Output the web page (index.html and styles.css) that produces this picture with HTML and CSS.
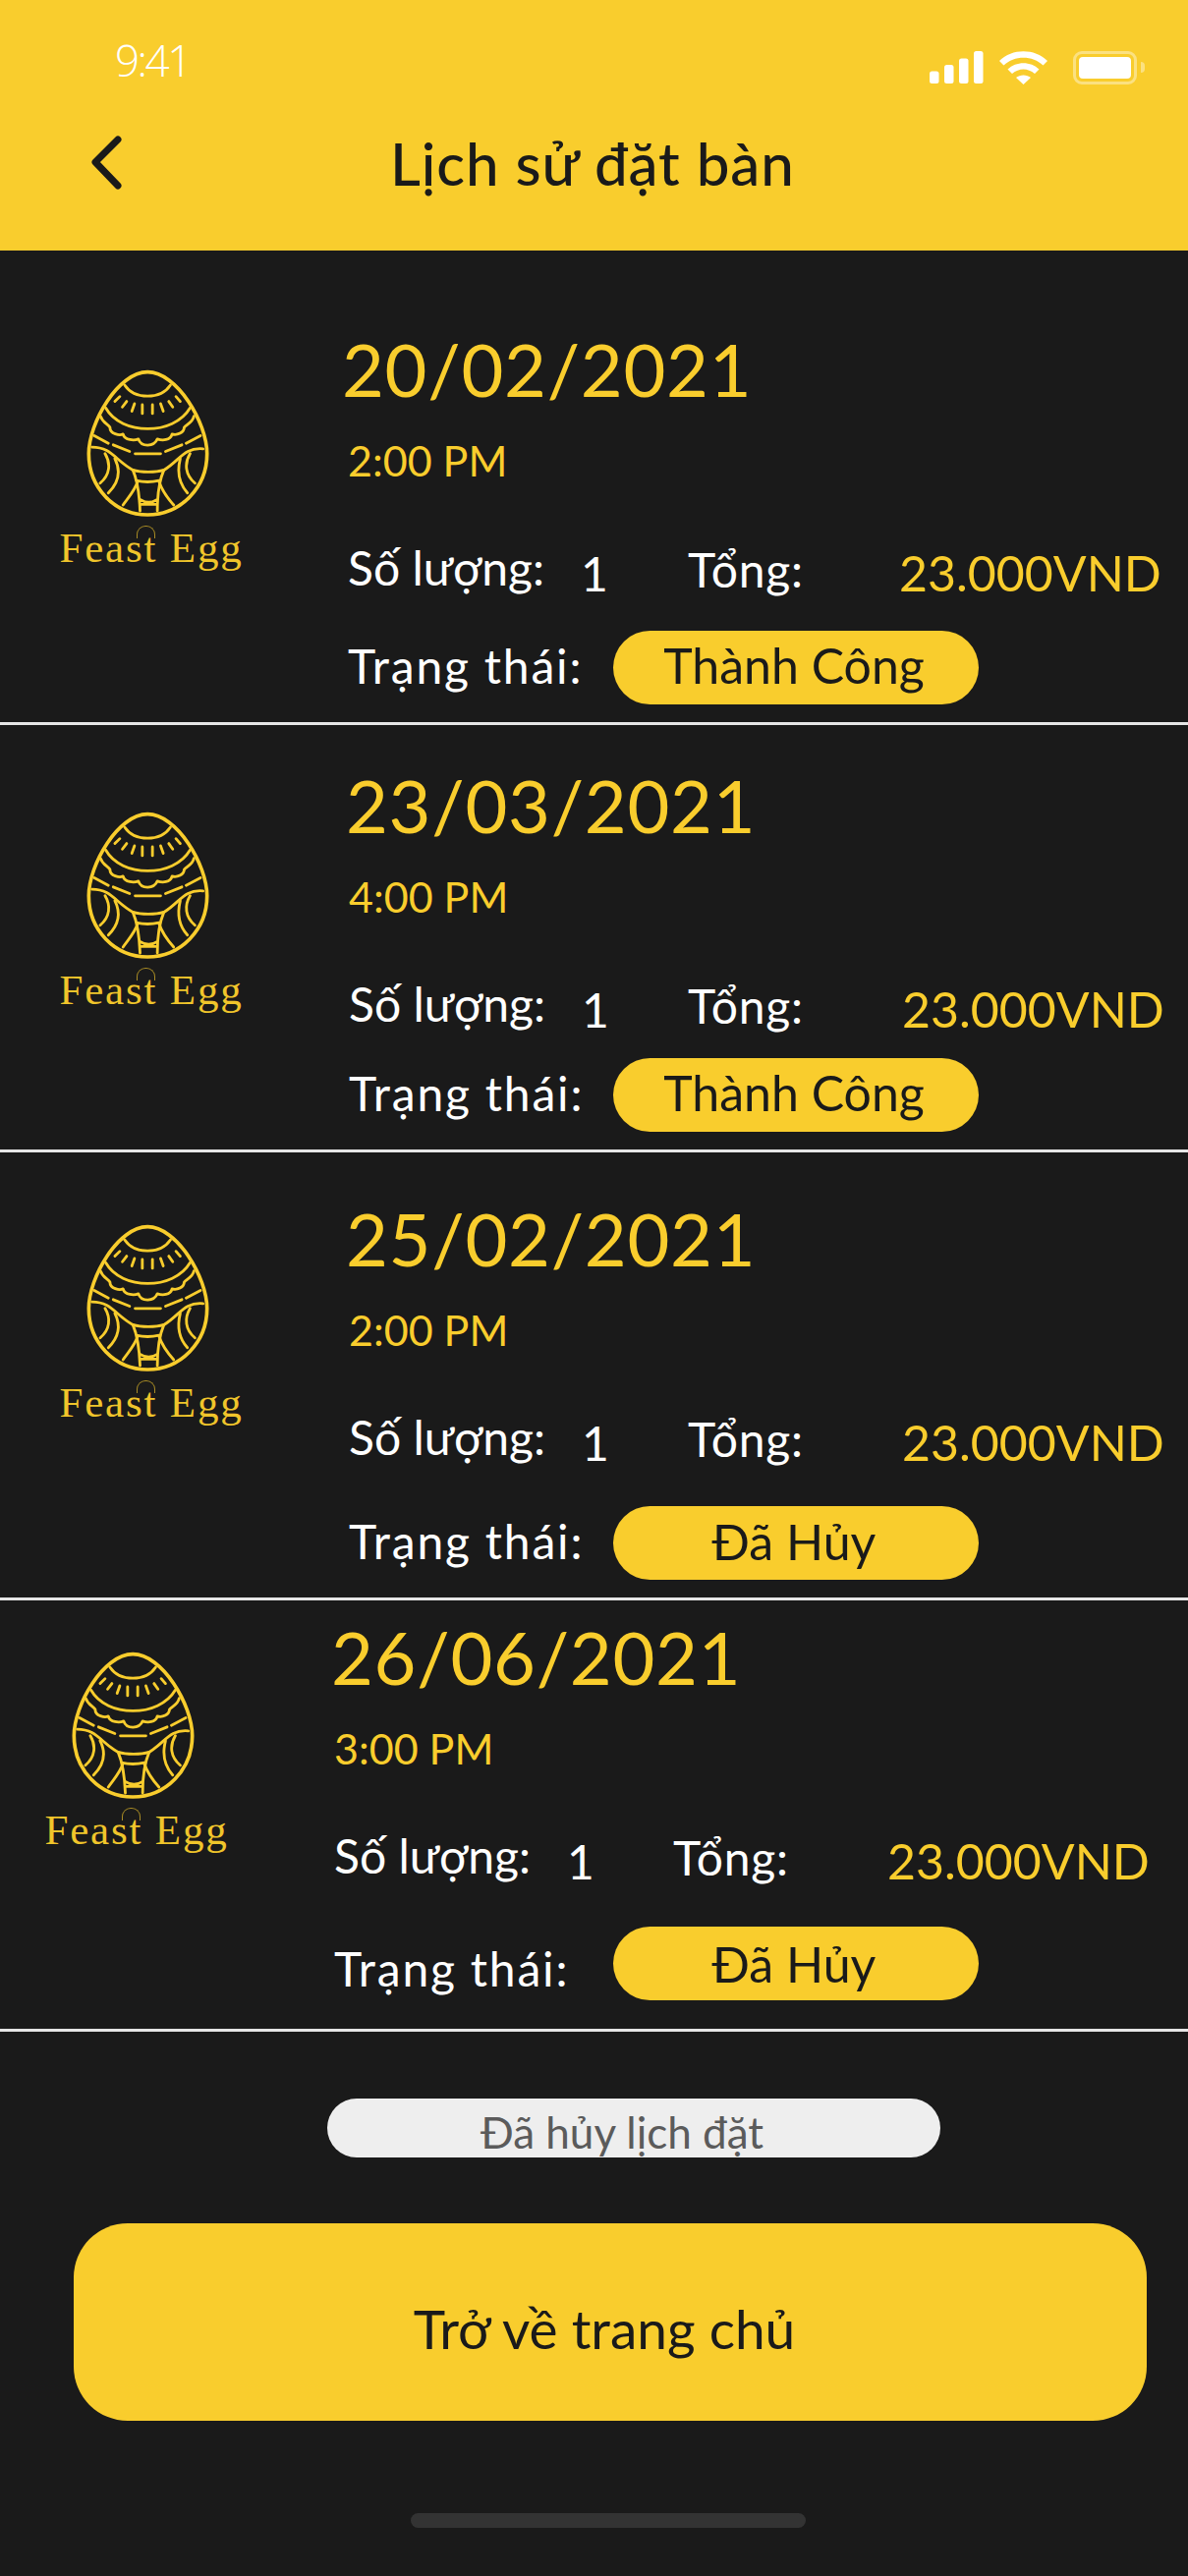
FILE: index.html
```html
<!DOCTYPE html>
<html lang="vi">
<head>
<meta charset="utf-8">
<title>Lịch sử đặt bàn</title>
<link rel="stylesheet" href="styles.css">
</head>
<body>
<svg class="defs" width="0" height="0" aria-hidden="true">
  <symbol id="egg" viewBox="170 105 382 458">
    <g fill="none" stroke="#f9cd2d" stroke-width="8.500" stroke-linecap="round" stroke-linejoin="round">
      <path stroke-width="11" d="M360 115C270 115 180 270 180 365C180 470 260 552 360 552C460 552 542 470 542 365C542 270 450 115 360 115Z"/>
      <path d="M290 155C320 200 400 200 430 155"/>
      <path d="M260 205L275 190M283 222L296 205M312 235L320 212M344 242V215M375 242V215M408 235L400 212M437 222L425 205M460 205L447 190"/>
      <path d="M232 225C280 310 440 310 490 225"/>
      <path d="M216 250C222 270 240 275 245 285C245 305 275 310 285 305C290 325 320 325 332 320C340 345 380 345 390 320C405 325 430 325 435 305C450 310 472 300 472 285C480 275 498 270 502 250"/>
      <path d="M197 310L240 333M255 338L305 358M322 365H400M415 358L465 338M478 333L522 310"/>
      <path d="M190 345C250 345 260 385 315 415C340 423 385 423 410 415C460 385 470 345 530 350"/>
      <path d="M230 365C248 395 245 430 215 455M260 380C280 420 270 455 240 485M330 450C320 480 300 500 285 522"/>
      <path d="M490 365C472 395 475 430 505 455M460 380C450 420 455 455 482 485M395 450C405 480 420 500 440 522"/>
      <path d="M315 415C330 450 335 490 337 540M410 415C395 450 390 490 390 540M325 447C345 452 375 452 395 447M337 505C355 517 372 517 390 505M337 520H390"/>
    </g>
  </symbol>
</svg>
<main class="screen">
  <header class="top">
    <div class="status">
      <span class="clock">9:41</span>
      <div class="status-icons">
        <svg class="signal" width="55" height="33" viewBox="0 0 55 33"><g fill="#fff"><rect x="0" y="20.500" width="9.500" height="12.500" rx="2.500"/><rect x="15" y="14" width="9.500" height="19" rx="2.500"/><rect x="30" y="7.500" width="9.500" height="25.500" rx="2.500"/><rect x="45" y="0" width="9.500" height="33" rx="2.500"/></g></svg>
        <svg class="wifi" width="50" height="34" viewBox="0 0 50 34"><g fill="#fff"><path d="M0 10C13-3 36-3 49 10L44.500 14.500C34 4 15 4 4.500 14.500Z"/><path d="M8.500 18.500C17 10 32 10 40.500 18.500L36 23C29 17 20 17 13 23Z"/><path d="M17 27C21 23.500 28 23.500 32 27L24.500 34Z"/></g></svg>
        <div class="battery"><span class="battery-fill"></span></div>
        <span class="battery-nub"></span>
      </div>
    </div>
    <div class="nav">
      <svg class="back" width="34" height="58" viewBox="0 0 34 58"><path d="M28 6L5 29L28 53" fill="none" stroke="#1a1a1a" stroke-width="7" stroke-linecap="round" stroke-linejoin="round"/></svg>
      <h1 class="title">Lịch sử đặt bàn</h1>
    </div>
  </header>

  <section class="row row-a">
    <div class="brand"><svg class="egg"><use href="#egg"/></svg><span class="brand-name">Feast Egg</span></div>
    <div class="info">
      <div class="date">20/02/2021</div>
      <div class="time">2:00 PM</div>
      <div class="line"><span class="qty-label">Số lượng:</span><span class="qty">1</span><span class="sum-label">Tổng:</span><span class="sum">23.000VND</span></div>
      <div class="state"><span class="state-label">Trạng thái:</span><span class="pill">Thành Công</span></div>
    </div>
  </section>
  <section class="row row-b">
    <div class="brand"><svg class="egg"><use href="#egg"/></svg><span class="brand-name">Feast Egg</span></div>
    <div class="info">
      <div class="date">23/03/2021</div>
      <div class="time">4:00 PM</div>
      <div class="line"><span class="qty-label">Số lượng:</span><span class="qty">1</span><span class="sum-label">Tổng:</span><span class="sum">23.000VND</span></div>
      <div class="state"><span class="state-label">Trạng thái:</span><span class="pill">Thành Công</span></div>
    </div>
  </section>
  <section class="row row-c">
    <div class="brand"><svg class="egg"><use href="#egg"/></svg><span class="brand-name">Feast Egg</span></div>
    <div class="info">
      <div class="date">25/02/2021</div>
      <div class="time">2:00 PM</div>
      <div class="line"><span class="qty-label">Số lượng:</span><span class="qty">1</span><span class="sum-label">Tổng:</span><span class="sum">23.000VND</span></div>
      <div class="state"><span class="state-label">Trạng thái:</span><span class="pill">Đã Hủy</span></div>
    </div>
  </section>
  <section class="row row-d">
    <div class="brand"><svg class="egg"><use href="#egg"/></svg><span class="brand-name">Feast Egg</span></div>
    <div class="info">
      <div class="date">26/06/2021</div>
      <div class="time">3:00 PM</div>
      <div class="line"><span class="qty-label">Số lượng:</span><span class="qty">1</span><span class="sum-label">Tổng:</span><span class="sum">23.000VND</span></div>
      <div class="state"><span class="state-label">Trạng thái:</span><span class="pill">Đã Hủy</span></div>
    </div>
  </section>

  <div class="cancelled"><span>Đã hủy lịch đặt</span></div>
  <div class="home-btn">Trở về trang chủ</div>
  <div class="indicator"></div>
</main>
</body>
</html>
```
FILE: styles.css
```css
* { box-sizing: border-box; }
html, body { margin: 0; padding: 0; }
body { background: #1a1a1a; font-family: "Lato", "Noto Sans", sans-serif; }
.defs { position: absolute; }
.screen { width: 1209px; height: 2622px; background: #1a1a1a; overflow: hidden; }

.top { height: 255px; background: #f9cd2d; }
.status { display: flex; justify-content: space-between; height: 100px; padding: 39px 44px 0 117px; }
.clock { color: #fff; font-family: "Open Sans", sans-serif; font-weight: 300; font-size: 44px; line-height: 44px; letter-spacing: -2.500px; }
.status-icons { display: flex; align-items: flex-start; padding-top: 13px; }
.wifi { margin-left: 16px; }
.battery { width: 65px; height: 34px; margin-left: 25px; padding: 3px; border: 3px solid rgba(255,255,255,.4); border-radius: 9px; }
.battery-fill { display: block; height: 22px; background: #fff; border-radius: 4px; }
.battery-nub { width: 4px; height: 11px; margin: 11px 0 0 4px; background: rgba(255,255,255,.4); border-radius: 0 4px 4px 0; }
.nav { display: flex; align-items: flex-start; height: 155px; padding: 36px 0 0 92px; }
.title { margin: -6px 0 0 271px; color: #1a1a1a; font-size: 60px; line-height: 72px; font-weight: 500; letter-spacing: .9px; white-space: nowrap; }

.row { display: flex; align-items: flex-start; border-bottom: 3px solid #e6e6e6; padding-left: 63px; }
.row-a { height: 483px; }
.row-b { height: 435px; }
.row-c { height: 456px; }
.row-d { height: 439px; padding-left: 48px; }

.brand { display: flex; flex-direction: column; align-items: center; width: 182px; flex: none; }
.row-a .brand { padding-top: 120px; }
.row-b .brand { padding-top: 87px; }
.row-c .brand { padding-top: 72px; }
.row-d .brand { padding-top: 51px; }
.egg { width: 127px; height: 153px; margin-right: 8px; }
.brand-name { position: relative; margin-top: 7px; color: #f0c52b; font-family: "Liberation Serif", serif; font-size: 43px; line-height: 46px; letter-spacing: 1.800px; white-space: nowrap; }
.brand-name::after { content: ""; position: absolute; left: 78px; top: 0; width: 17px; height: 12px; border: 1px solid #a88b25; border-bottom: 0; border-radius: 9px 9px 0 0; }

.info { margin-left: 110px; width: 840px; }
.row-a .info { margin-left: 109px; padding-top: 76px; }
.row-b .info { padding-top: 37px; }
.row-c .info { padding-top: 43px; }
.row-d .info { padding-top: 13px; }
.date { margin-left: -3px; color: #f9cd2d; font-size: 74px; line-height: 90px; letter-spacing: .7px; white-space: nowrap; }
.row-a .date { margin-left: -6px; }
.time { margin-top: 20px; color: #f9cd2d; font-size: 43px; line-height: 56px; }
.line { display: flex; align-items: flex-start; height: 60px; margin-top: 51px; color: #fff; font-size: 48px; line-height: 60px; }
.qty-label { width: 237px; }
.qty { width: 108px; padding-top: 6px; }
.row-a .qty { width: 109px; }
.sum-label { width: 218px; padding-top: 2px; letter-spacing: .8px; }
.row-a .sum-label { width: 215px; }
.sum { color: #f9cd2d; font-size: 50px; padding-top: 5px; }
.state { display: flex; align-items: flex-start; margin-top: 25px; color: #fff; font-size: 48px; line-height: 60px; }
.row-a .state { margin-top: 34px; }
.row-c .state { margin-top: 40px; }
.row-d .state { margin-top: 42px; }
.state-label { width: 269px; padding-top: 6px; letter-spacing: 1.800px; white-space: nowrap; }
.row-a .state-label { width: 270px; }
.row-d .state-label { width: 284px; padding-top: 13px; }
.pill { display: flex; align-items: center; justify-content: center; width: 372px; height: 75px; padding: 0 4px 6px 0; background: #f9cd2d; color: #1a1a1a; border-radius: 38px; font-size: 50px; }
.row-d .pill { padding-bottom: 0; }
.row-c .pill { padding-bottom: 4px; }

.cancelled { width: 624px; height: 60px; margin: 68px 0 0 333px; padding: 8px 24px 0 0; overflow: hidden; background: #eee; border-radius: 30px; color: #5b5b5b; font-size: 44px; line-height: 53px; text-align: center; }
.home-btn { display: flex; align-items: center; justify-content: center; width: 1092px; height: 201px; margin: 67px 0 0 75px; padding: 12px 12px 0 0; background: #f9cd2d; border-radius: 55px; color: #1a1a1a; font-size: 55px; }
.indicator { width: 402px; height: 15px; margin: 94px 0 0 418px; background: #333; border-radius: 8px; }
```
